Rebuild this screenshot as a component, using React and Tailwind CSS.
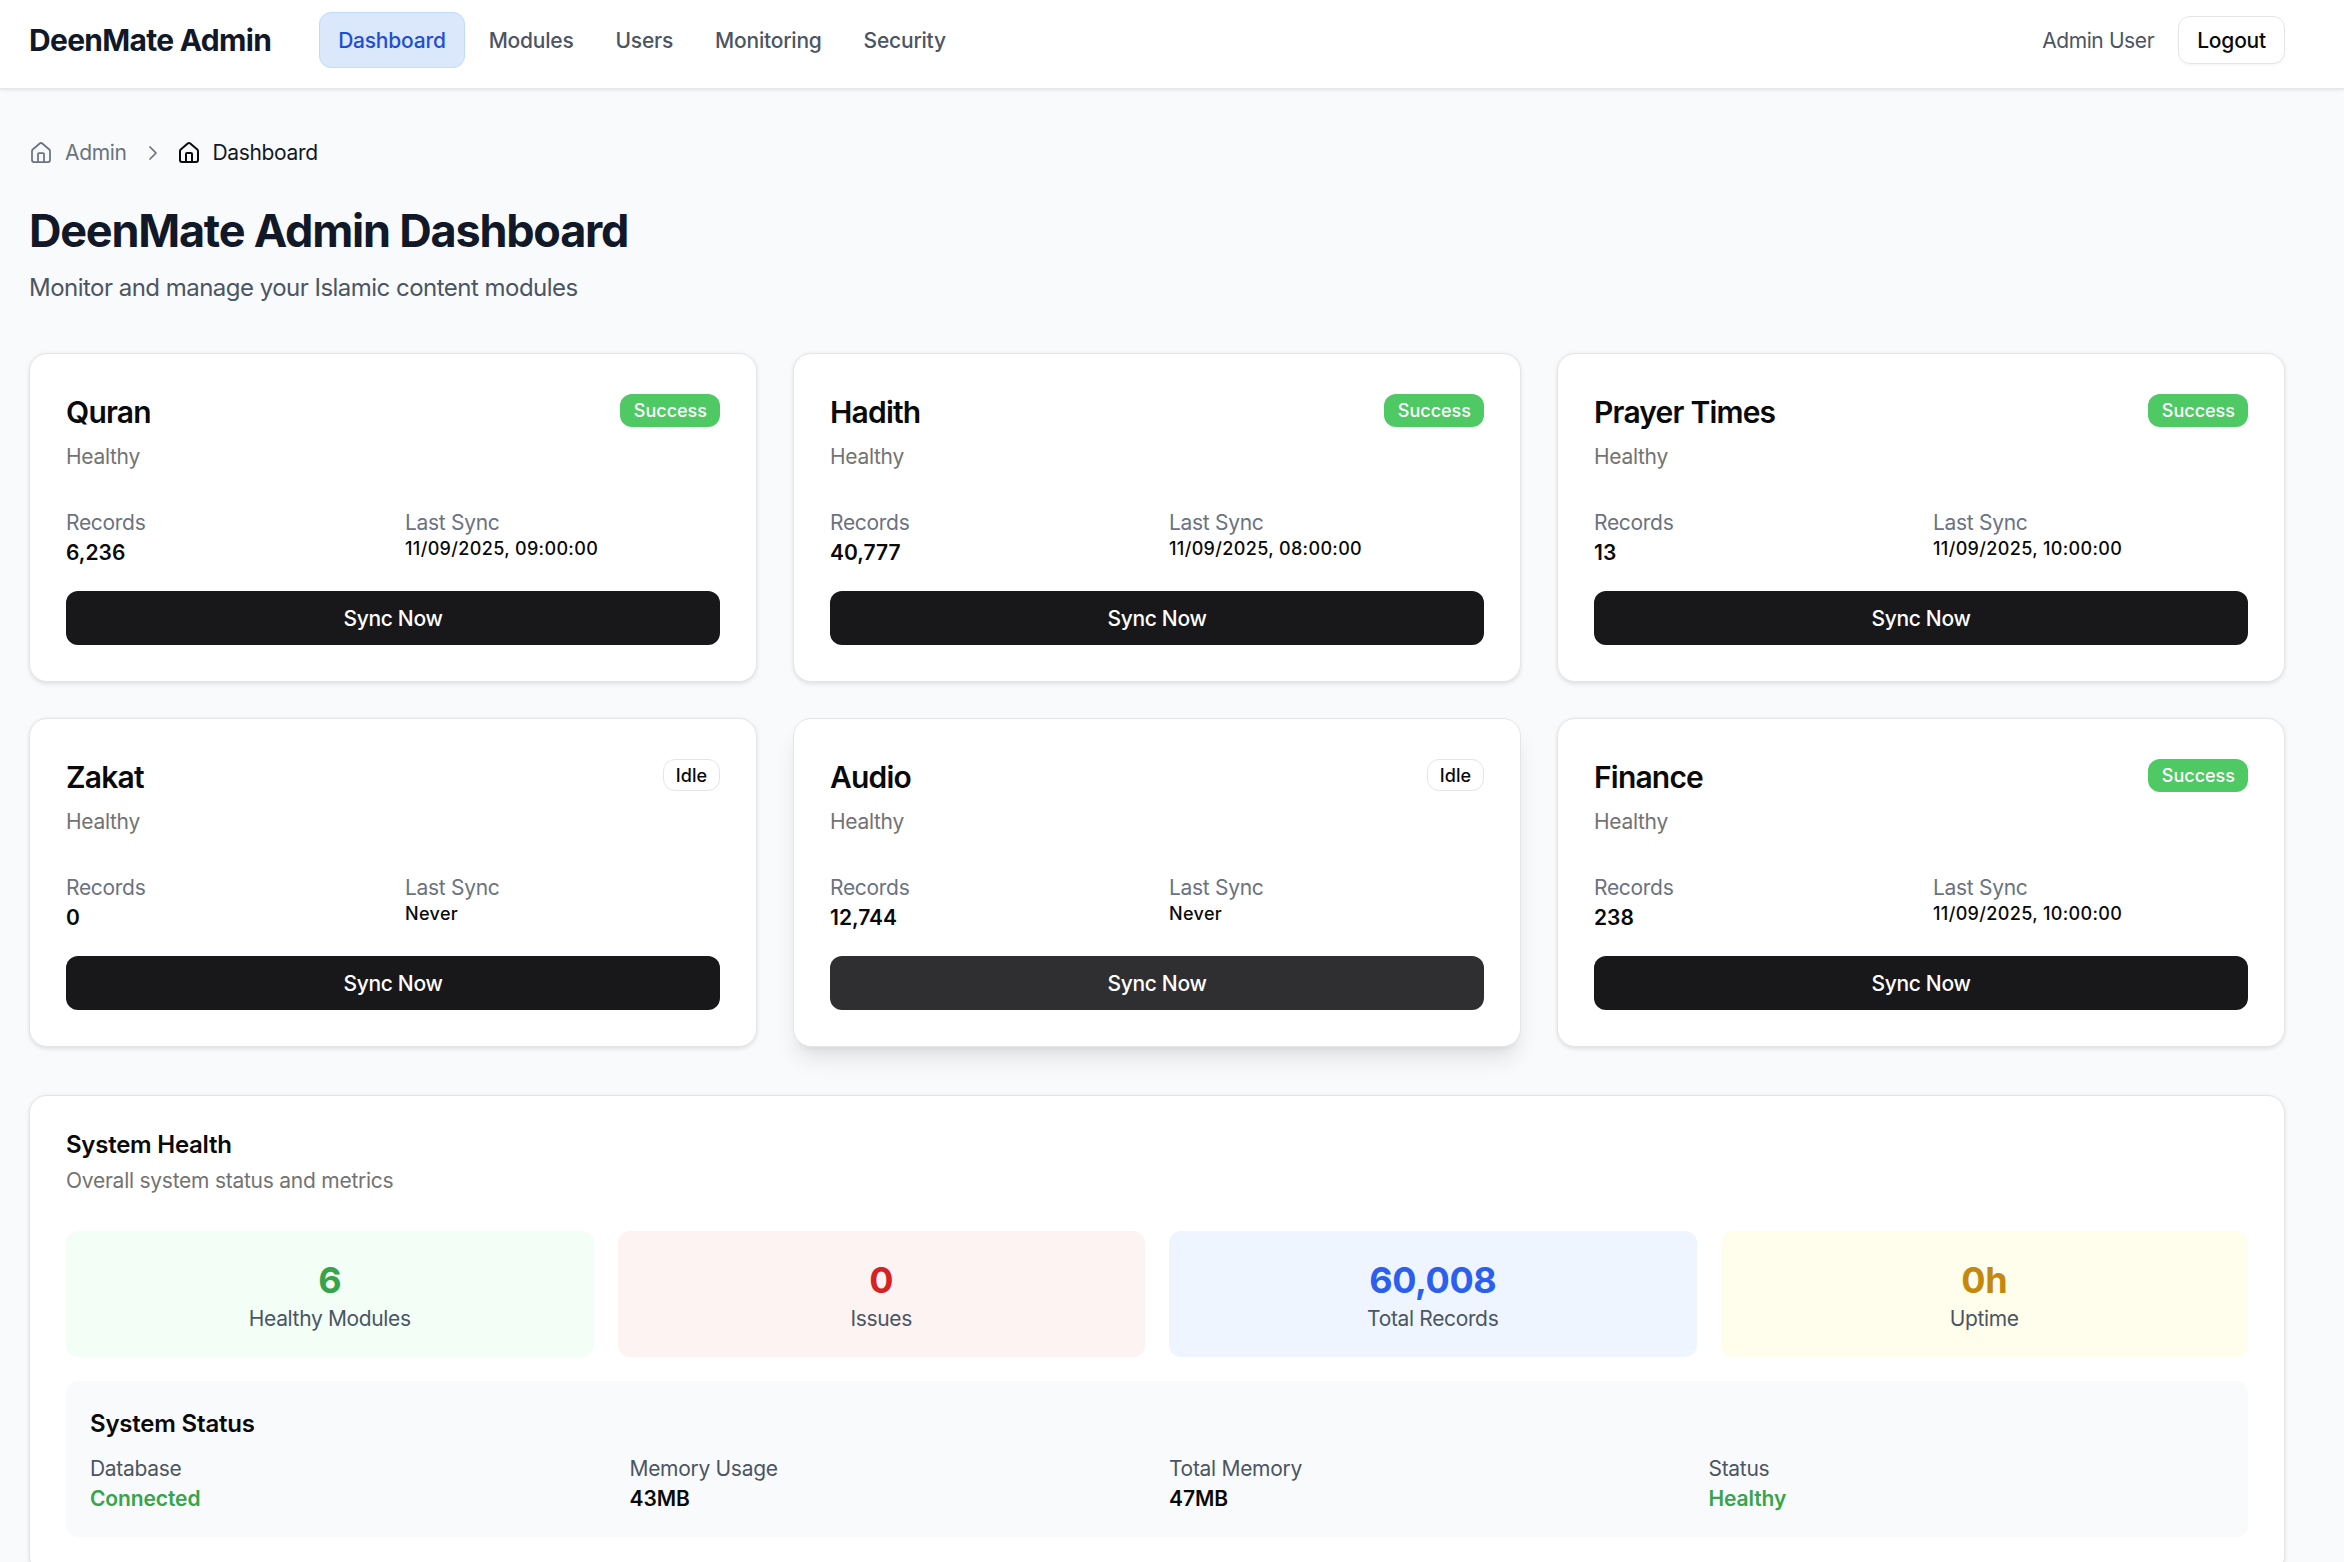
import { Home, ChevronRight } from 'lucide-react'

const NAV = ['Modules', 'Users', 'Monitoring', 'Security']

const MODULES = [
    { name: 'Quran', status: 'Success', records: '6,236', lastSync: '11/09/2025, 09:00:00' },
    { name: 'Hadith', status: 'Success', records: '40,777', lastSync: '11/09/2025, 08:00:00' },
    { name: 'Prayer Times', status: 'Success', records: '13', lastSync: '11/09/2025, 10:00:00' },
    { name: 'Zakat', status: 'Idle', records: '0', lastSync: 'Never' },
    { name: 'Audio', status: 'Idle', records: '12,744', lastSync: 'Never', hover: true },
    { name: 'Finance', status: 'Success', records: '238', lastSync: '11/09/2025, 10:00:00' },
]

const TILES = [
    { value: '6', label: 'Healthy Modules', bg: 'bg-[#f2fef6]', color: 'text-[#37a44b]' },
    { value: '0', label: 'Issues', bg: 'bg-[#fdf3f2]', color: 'text-[#d62222]' },
    { value: '60,008', label: 'Total Records', bg: 'bg-[#eef5fe]', color: 'text-[#2c5fee]' },
    { value: '0h', label: 'Uptime', bg: 'bg-[#fffdeb]', color: 'text-[#c4880c]' },
]

const STATUS = [
    { label: 'Database', value: 'Connected', color: 'text-[#37a44b]' },
    { label: 'Memory Usage', value: '43MB', color: 'text-[#0a0a0a]' },
    { label: 'Total Memory', value: '47MB', color: 'text-[#0a0a0a]' },
    { label: 'Status', value: 'Healthy', color: 'text-[#37a44b]' },
]

function Badge({ status }) {
    if (status === 'Idle') {
        return (
            <span className="rounded-xl border-[1.5px] border-[#e5e5e5] bg-white px-3 py-[1.5px] text-[18px] leading-[27px] font-medium text-[#0a0a0a]">
                {status}
            </span>
        )
    }
    return (
        <span className="rounded-xl bg-[#4fc964] py-[3px] pr-[13px] pl-[14px] text-[18px] leading-[27px] font-medium text-white">
            {status}
        </span>
    )
}

function ModuleCard({ module }) {
    return (
        <div className={`rounded-[18px] border-[1.5px] border-[#e5e5e5] bg-white p-9 ${module.hover ? 'shadow-[0_15px_22px_-4px_rgba(0,0,0,0.1),0_6px_9px_-6px_rgba(0,0,0,0.1)]' : 'shadow-[0_1.5px_4px_0_rgba(0,0,0,0.1)]'}`}>
            <div className="flex items-start justify-between">
                <div>
                    <h3 className="pt-px text-[30px] leading-[42px] font-semibold tracking-[-0.8px] text-[#0a0a0a]">{module.name}</h3>
                    <p className="mt-[9px] text-[21px] leading-[30px] tracking-[-0.3px] text-[#737373]">Healthy</p>
                </div>
                <div className="mt-[4px] flex">
                    <Badge status={module.status} />
                </div>
            </div>
            <div className="mt-9 grid grid-cols-2 gap-6">
                <div>
                    <p className="text-[21px] leading-[30px] tracking-[-0.3px] text-[#6b7280]">Records</p>
                    <p className="text-[21px] leading-[30px] font-semibold text-[#0a0a0a]">{module.records}</p>
                </div>
                <div>
                    <p className="text-[21px] leading-[30px] tracking-[-0.3px] text-[#6b7280]">Last Sync</p>
                    <p className="text-[18px] leading-[21px] font-medium tracking-[0.35px] text-[#0a0a0a]">{module.lastSync}</p>
                </div>
            </div>
            <button className={`mt-[23px] h-[54px] w-full rounded-xl pt-[2px] text-[21px] font-[450] tracking-[-0.3px] text-white ${module.hover ? 'bg-[#2f2f31]' : 'bg-[#18181b]'}`}>
                Sync Now
            </button>
        </div>
    )
}

export default function App() {
    return (
        <div className="h-[1562px] overflow-hidden bg-[#f9fafb] font-['Inter',sans-serif]">
            <header className="flex h-[89px] items-center justify-between border-b-[1.5px] border-[#e5e7eb] bg-white pr-[59px] pb-2 pl-[29px] shadow-[0_1.5px_3px_0_rgba(0,0,0,0.08)]">
                <div className="flex items-center gap-12">
                    <span className="text-[30px] leading-[42px] font-bold tracking-[-0.7px] text-[#111827]">DeenMate Admin</span>
                    <nav className="flex items-center gap-1.5">
                        <a className="rounded-xl border-[1.5px] border-[#bfdbfe] bg-[#dbe7fb] px-[18px] pt-[13px] pb-[11px] text-[21px] leading-[30px] font-medium tracking-[-0.22px] text-[#1d4ed8]">Dashboard</a>
                        {NAV.map(item => (
                            <a key={item} className="px-[18px] pt-[13px] pb-[11px] text-[21px] leading-[30px] font-medium tracking-[-0.22px] text-[#4b5563]">{item}</a>
                        ))}
                    </nav>
                </div>
                <div className="flex items-center gap-6">
                    <span className="pt-[1px] text-[21px] leading-[30px] tracking-[-0.4px] text-[#4b5563]">Admin User</span>
                    <button className="h-12 rounded-xl border-[1.5px] border-[#e5e5e5] bg-white px-[18px] pt-[1px] text-[21px] font-medium tracking-[-0.2px] text-[#0a0a0a] shadow-[0_1.5px_2px_0_rgba(0,0,0,0.03)]">Logout</button>
                </div>
            </header>

            <main className="pt-[49px] pr-[59px] pl-[29px]">
                <div className="mb-9 flex h-[30px] items-center text-[21px] leading-[30px] tracking-[-0.35px]">
                    <Home size={24} strokeWidth={1.75} className="text-[#6b7280]" />
                    <span className="ml-3 text-[#6b7280]">Admin</span>
                    <ChevronRight size={24} strokeWidth={1.75} className="mr-[12px] ml-[14px] text-[#6b7280]" />
                    <Home size={24} strokeWidth={2} className="text-[#0a0a0a]" />
                    <span className="ml-3 text-[#111827]">Dashboard</span>
                </div>

                <h1 className="text-[45px] leading-[54px] font-bold tracking-[-1.22px] text-[#111827]">DeenMate Admin Dashboard</h1>
                <p className="mt-3 mb-[47px] text-[24px] leading-[36px] tracking-[-0.52px] text-[#4b5563]">Monitor and manage your Islamic content modules</p>

                <div className="mb-12 grid grid-cols-3 gap-9">
                    {MODULES.map(m => <ModuleCard key={m.name} module={m} />)}
                </div>

                <section className="rounded-[18px] border-[1.5px] border-[#e5e5e5] bg-white px-9 pt-[37px] pb-9 shadow-[0_1.5px_4px_0_rgba(0,0,0,0.1)]">
                    <h2 className="text-[24px] leading-[24px] font-semibold tracking-[-0.25px] text-[#0a0a0a]">System Health</h2>
                    <p className="mt-[9px] text-[21px] leading-[30px] tracking-[-0.25px] text-[#737373]">Overall system status and metrics</p>

                    <div className="mt-[35px] grid grid-cols-4 gap-6">
                        {TILES.map(t => (
                            <div key={t.label} className={`rounded-xl px-6 pt-[24.5px] pb-[23.5px] text-center ${t.bg}`}>
                                <div className={`text-[36px] leading-[48px] font-bold tracking-[-0.4px] ${t.color}`}>{t.value}</div>
                                <div className="text-[21px] leading-[30px] tracking-[-0.35px] text-[#4b5563]">{t.label}</div>
                            </div>
                        ))}
                    </div>

                    <div className="mt-6 rounded-xl bg-[#f9fafb] px-6 pt-[24.5px] pb-[23.5px]">
                        <h3 className="mb-3 text-[24px] leading-[36px] font-semibold tracking-[-0.2px] text-[#0a0a0a]">System Status</h3>
                        <div className="grid grid-cols-4 gap-6">
                            {STATUS.map(s => (
                                <div key={s.label}>
                                    <p className="text-[21px] leading-[30px] tracking-[-0.3px] text-[#4b5563]">{s.label}</p>
                                    <p className={`text-[21px] leading-[30px] font-semibold tracking-[-0.1px] ${s.color}`}>{s.value}</p>
                                </div>
                            ))}
                        </div>
                    </div>
                </section>
            </main>
        </div>
    )
}
